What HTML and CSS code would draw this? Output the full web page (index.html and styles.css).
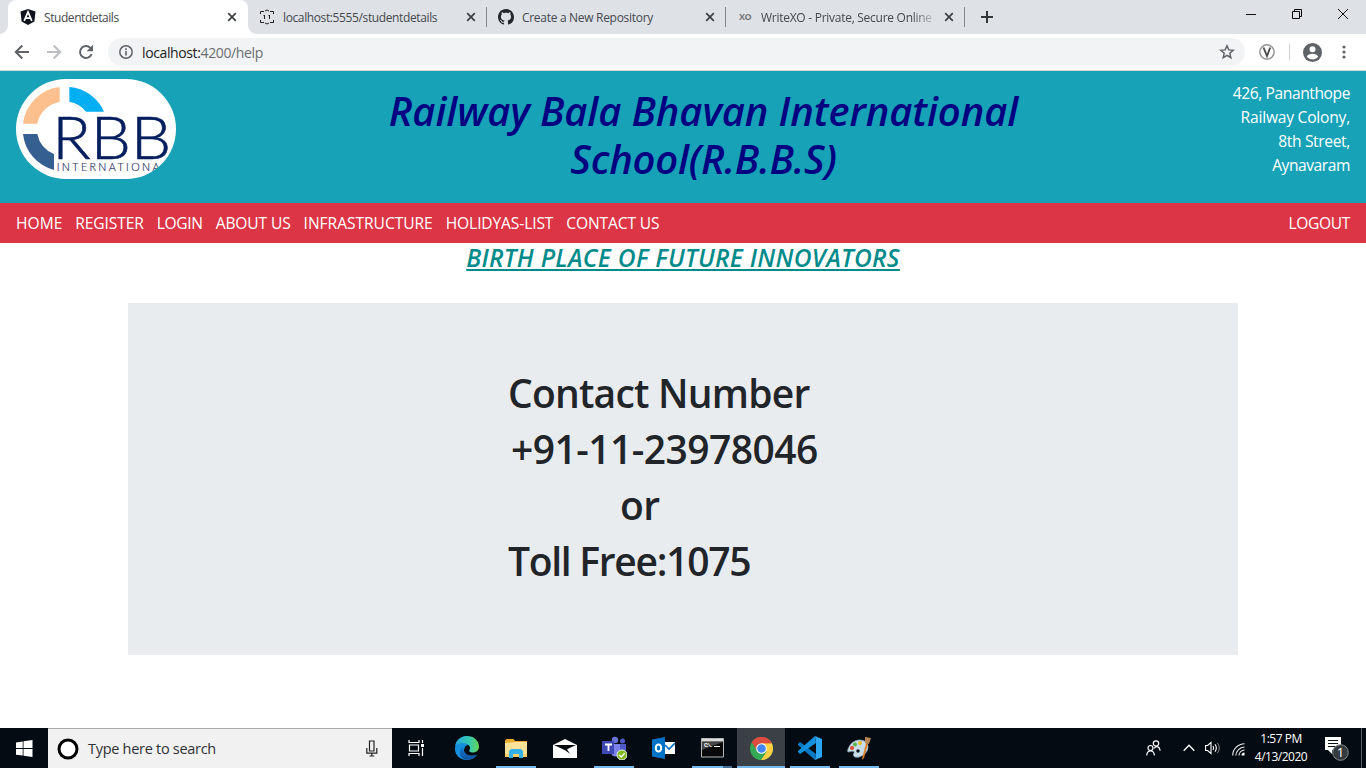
FILE: index.html
```html
<!DOCTYPE html>
<html lang="en">
<head>
<meta charset="utf-8">
<title>Studentdetails</title>
<link rel="stylesheet" href="styles.css">
</head>
<body>
<div class="screen">
  <div class="tabstrip">
    <div class="tab tab-active">
      <svg class="fav" viewBox="0 0 16 16"><path fill="#10131c" d="M8 0l7.500 2.600-1.100 10L8 16l-6.400-3.400L.5 2.600z"/><path fill="none" stroke="#fff" stroke-width="1.700" d="M4.200 11.800L8 2.900l3.800 8.900M5.700 9.200h4.600"/></svg>
      <span class="tab-title t1">Studentdetails</span>
      <svg class="close" viewBox="0 0 10 10"><path d="M1.200 1.200l7.600 7.600M8.800 1.200L1.200 8.800"/></svg>
    </div>
    <div class="tab">
      <svg class="fav" viewBox="0 0 16 16"><path fill="none" stroke="#222" d="M1.500 5V2.500H5M6 2l2-1 2 1M11 2.500h3.500V5M1.500 11v2.500H5M6 14l2 1 2-1M11 13.500h3.500V11M5.500 6v4M4.500 6.500h1M10.500 6v4M9.500 6.500h1"/></svg>
      <span class="tab-title t2">localhost:5555/studentdetails</span>
      <svg class="close" viewBox="0 0 10 10"><path d="M1.200 1.200l7.600 7.600M8.800 1.200L1.200 8.800"/></svg>
    </div>
    <div class="tab tab-line">
      <svg class="fav" viewBox="0 0 16 16"><path fill="#24292e" d="M8 0C3.580 0 0 3.580 0 8c0 3.540 2.290 6.530 5.470 7.590.4.070.55-.17.55-.38 0-.19-.01-.82-.01-1.490-2.010.37-2.530-.49-2.690-.94-.09-.23-.48-.94-.82-1.130-.28-.15-.68-.52-.01-.53.63-.01 1.080.58 1.230.82.72 1.210 1.870.87 2.330.66.07-.52.28-.87.51-1.070-1.780-.2-3.640-.89-3.640-3.950 0-.87.31-1.590.82-2.150-.08-.2-.36-1.020.08-2.120 0 0 .67-.21 2.200.82.640-.18 1.320-.27 2-.27s1.360.09 2 .27c1.530-1.040 2.200-.82 2.200-.82.44 1.100.16 1.920.08 2.120.51.56.82 1.270.82 2.150 0 3.070-1.870 3.750-3.650 3.950.29.25.54.73.54 1.480 0 1.070-.01 1.930-.01 2.200 0 .21.15.46.55.38A8.010 8.010 0 0 0 16 8c0-4.420-3.580-8-8-8z"/></svg>
      <span class="tab-title t3">Create a New Repository</span>
      <svg class="close" viewBox="0 0 10 10"><path d="M1.200 1.200l7.600 7.600M8.800 1.200L1.200 8.800"/></svg>
    </div>
    <div class="tab tab-line">
      <span class="fav xo">XO</span>
      <span class="tab-title t4">WriteXO - Private, Secure Online</span>
      <svg class="close" viewBox="0 0 10 10"><path d="M1.200 1.200l7.600 7.600M8.800 1.200L1.200 8.800"/></svg>
    </div>
    <div class="newtab tab-line"><svg width="12" height="12" viewBox="0 0 12 12"><path stroke="#333639" stroke-width="2" d="M6 0v12M0 6h12"/></svg></div>
    <div class="wincontrols">
      <svg width="10" height="10" viewBox="0 0 10 10"><path stroke="#111" d="M0 5.500h10"/></svg>
      <svg width="10" height="10" viewBox="0 0 10 10"><path fill="none" stroke="#000" d="M.5 2.500h7v7h-7zM2.500 2.500v-2h7v7h-2"/></svg>
      <svg width="10" height="10" viewBox="0 0 10 10"><path stroke="#111" d="M0 0l10 10M10 0L0 10"/></svg>
    </div>
  </div>

  <div class="toolbar">
    <svg class="navicon" viewBox="0 0 16 16"><path stroke="#5f6368" d="M15 8H2M8.300 1.500L1.800 8l6.500 6.500"/></svg>
    <svg class="navicon" viewBox="0 0 16 16"><path stroke="#bcbec1" d="M1 8h13M7.700 1.500L14.200 8l-6.500 6.500"/></svg>
    <svg class="navicon" viewBox="0 0 16 16"><path stroke="#5f6368" d="M13.600 10.200A6 6 0 1 1 12.400 3.900L14 5.500"/><path fill="#5f6368" d="M15 .8v6.400H8.600z"/></svg>
    <div class="omnibox">
      <svg width="14" height="14" viewBox="0 0 14 14"><circle cx="7" cy="7" r="6.200" fill="none" stroke="#5f6368" stroke-width="1.500"/><path stroke="#5f6368" stroke-width="1.600" d="M7 6v4.500M7 3.300v1.600"/></svg>
      <span class="url">localhost:<i>4200/help</i></span>
      <svg class="star" width="16" height="16" viewBox="0 0 16 16"><path fill="none" stroke="#5f6368" stroke-width="1.500" d="M8 1.800l1.800 4.100 4.400.4-3.400 2.900 1 4.400L8 11.300l-3.800 2.300 1-4.400-3.400-2.900 4.400-.4z"/></svg>
    </div>
    <svg class="ext" width="16" height="16" viewBox="0 0 16 16"><circle cx="8" cy="8" r="7.200" fill="#fafafa" stroke="#929292" stroke-width="1.400"/><path fill="none" stroke="#494949" stroke-width="1.800" d="M4.500 3.500L8 12l3.200-8.500"/></svg>
    <span class="bar"></span>
    <svg class="profile" width="19" height="19" viewBox="0 0 19 19"><circle cx="9.500" cy="9.500" r="9.500" fill="#5f6368"/><circle cx="9.500" cy="6.300" r="3" fill="#fff"/><path fill="#fff" d="M3.800 13.400c1.500-3.400 9.900-3.400 11.400 0-2.700 4-8.700 4-11.400 0z"/></svg>
    <svg class="dots" width="4" height="14" viewBox="0 0 4 14"><g fill="#5f6368"><circle cx="2" cy="2" r="1.600"/><circle cx="2" cy="7" r="1.600"/><circle cx="2" cy="12" r="1.600"/></g></svg>
  </div>

  <main class="page">
    <header class="banner">
      <svg class="logo" viewBox="48 27 480 300">
        <path fill="#fcc08f" d="M179 51A125 125 0 0 0 69 161H112A82 82 0 0 1 179 96Z"/>
        <path fill="#03aef3" d="M208 51A125 125 0 0 1 312 125H258A80 80 0 0 0 208 95Z"/>
        <path fill="#365f91" d="M69 192H112A82 82 0 0 0 162 252V300A125 125 0 0 1 69 192Z"/>
        <text class="logo-rbb" x="157" y="268" textLength="356" lengthAdjust="spacingAndGlyphs">RBB</text>
        <text class="logo-int" x="170" y="302" textLength="332">INTERNATIONAL</text>
      </svg>
      <h1 class="school"><span class="s1">Railway Bala Bhavan International</span><br><span class="s2">School(R.B.B.S)</span></h1>
      <address class="address"><span class="a1">426, Pananthope</span><br><span class="a2">Railway Colony,</span><br><span class="a3">8th Street,</span><br><span class="a4">Aynavaram</span></address>
    </header>
    <nav class="menu">
      <a class="m1">HOME</a><a class="m2">REGISTER</a><a class="m3">LOGIN</a><a class="m4">ABOUT US</a><a class="m5">INFRASTRUCTURE</a><a class="m6">HOLIDYAS-LIST</a><a class="m7">CONTACT US</a><a class="m8">LOGOUT</a>
    </nav>
    <h2 class="motto">BIRTH PLACE OF FUTURE INNOVATORS</h2>
    <section class="jumbo">
      <h1 class="c1">Contact Number</h1>
      <h1 class="c2">+91-11-23978046</h1>
      <h1 class="c3">or</h1>
      <h1 class="c4">Toll Free:1075</h1>
    </section>
  </main>

  <footer class="taskbar">
    <div class="start"><svg width="17" height="17" viewBox="0 0 17 17"><path fill="#fff" d="M0 2.400l6.700-1v6.700H0zM7.500 1.200L16.500 0v8.100h-9zM0 8.900h6.700v6.700L0 14.700zM7.500 8.900h9V17l-9-1.200z"/></svg></div>
    <div class="search">
      <svg width="22" height="22" viewBox="0 0 22 22"><circle cx="11" cy="11" r="9" fill="#fff" stroke="#000" stroke-width="3"/></svg>
      <span class="hint">Type here to search</span>
      <svg class="mic" width="12" height="17" viewBox="0 0 12 17"><path fill="none" stroke="#222" stroke-width="1.200" d="M3.500 1h4.500v10H3.500zM.8 8v5.200h10V8M5.800 13v3M3.500 16h4.800"/></svg>
    </div>
    <div class="task view"><svg width="18" height="16" viewBox="0 0 18 16"><path fill="none" stroke="#fff" stroke-width="1.200" d="M1 0v2.500h10V0M1.500 5h9v6h-9zM1 16v-2.500h10V16M14.500 0v3M14.500 8v8"/><path fill="#fff" d="M13 4h3v3h-3z"/></svg></div>
    <div class="apps">
      <div class="task"><svg width="24" height="24" viewBox="0 0 24 24"><defs><linearGradient id="eg"><stop stop-color="#25a8df"/><stop offset=".6" stop-color="#35c9b0"/><stop offset="1" stop-color="#67d553"/></linearGradient><linearGradient id="eb" x2="0" y2="1"><stop stop-color="#1780d5"/><stop offset="1" stop-color="#0d4f9f"/></linearGradient></defs><path fill="#1690dd" d="M0 13C0 5 5 0 12 0l5 10c-4-3-8 0-8 5 0 6 8 8 13 4-7 9-22 5-22-6z"/><path fill="url(#eg)" d="M.3 9C2 3.500 6.500 0 12 0c7 0 12 5 12 10.500 0 4-3 6-6.500 6-2.500 0-4-1-3-2.500 3-5-6-10-13.700-5z"/><path fill="url(#eb)" d="M8.500 10.500C7.500 16 12 21.500 22 18.800 19 23.500 13.500 24.500 10 23.500 3 21 3.500 13 8.500 10.500z"/></svg></div>
      <div class="task run"><svg width="22" height="19" viewBox="0 0 22 19"><path fill="#e9ac2c" d="M0 1.500L1.500 0h7L10 2h12v4H0z"/><path fill="#ffe29a" d="M0 4l10-1h12v15H0z"/><path fill="#f8cf66" d="M0 15h22v3H0z"/><path fill="#35b1e9" d="M4 19v-7l2-2h10l2 2v7h-4v-4H8v4z"/></svg></div>
      <div class="task"><svg width="24" height="19" viewBox="0 0 24 19"><path fill="#fff" d="M0 6L12 0l12 6v13H0z"/><path fill="#070b10" d="M1 6h22l-9 4.300 3 4.500-5-3.500z"/></svg></div>
      <div class="task run"><svg width="25" height="24" viewBox="0 0 25 24"><circle cx="13" cy="4" r="3.200" fill="#6972d5"/><circle cx="20.500" cy="5" r="2.500" fill="#5059c9"/><path fill="#7b83eb" d="M9 8h9v8c0 6-9 6-9 0z"/><path fill="#5059c9" d="M18 8h6v6c0 4-6 5-6 0z"/><path fill="#3f49b5" d="M0 5h12v13H0z"/><path stroke="#fff" stroke-width="1.800" d="M3 8.500h7M6.500 8v7"/><circle cx="20" cy="19" r="5" fill="#7fba1c" stroke="#e9f4dd"/><path fill="none" stroke="#fff" stroke-width="1.400" d="M17.300 19l2 2 3.400-3.700"/></svg></div>
      <div class="task"><svg width="23" height="22" viewBox="0 0 23 22"><path fill="#fff" d="M12 5h11v12H12z"/><path fill="none" stroke="#0072c6" stroke-width="1.600" d="M13 8l4 4 6-6"/><path fill="#0072c6" d="M0 2.500L13 0v22L0 19.500z"/><ellipse cx="6.500" cy="11" rx="2.700" ry="3.600" fill="none" stroke="#fff" stroke-width="2"/></svg></div>
      <div class="task run two"><svg width="23" height="20" viewBox="0 0 23 20"><path fill="#090909" stroke="#b6b8b9" d="M.5.500h22v18.500H.5z"/><path fill="#ddd" d="M1 1h21v2.500H1z"/><path fill="#454545" d="M1 4h21L1 12z"/><text class="cmd" x="3" y="9" textLength="9">C:\.</text><path stroke="#fff" d="M13 8.500h6"/></svg></div>
      <div class="task run active"><svg width="23" height="23" viewBox="0 0 24 24"><circle cx="12" cy="12" r="12" fill="#34a853"/><path fill="#de4b3f" d="M12 12L1.600 6a12 12 0 0 1 20.800 0z"/><path fill="#ffd044" d="M12 6.500h10.700A12 12 0 0 1 11.500 24l6-9z"/><path fill="#de4b3f" d="M2 5.400L7 14l5-7.500h10.700A12 12 0 0 0 2 5.400z"/><circle cx="12" cy="12" r="5.600" fill="#fff"/><circle cx="12" cy="12" r="4.500" fill="#4285f4"/></svg></div>
      <div class="task run"><svg width="24" height="24" viewBox="0 0 24 24"><path fill="#0879c2" d="M0 8l2-2 16 12-1 6L0 9z"/><path fill="#1590dc" d="M0 16l2 2L18 7l-1-7L0 15z"/><path fill="#2aa7ef" d="M17 0l7 3v18l-7 3 1-5V6z"/></svg></div>
      <div class="task run"><svg width="24" height="24" viewBox="0 0 24 24"><path fill="#c9dce9" stroke="#8ba9bd" stroke-width=".7" d="M2 11C5 4 14 2 19 6c5 6 0 13-7 15-4 1-7-1-5-4 1-3-4-1-6-1-1-1 0-3 1-5z"/><circle cx="5" cy="12" r="2" fill="#e34729"/><circle cx="8" cy="8.500" r="2" fill="#55b44a"/><circle cx="13" cy="7" r="2" fill="#e9bb28"/><circle cx="11" cy="15" r="1.700" fill="#0a1118"/><path fill="#d9822b" d="M19 7l2 1-4 14-2 2 1-5z"/><path fill="#b98552" d="M18 1l6 1-2 6-4-1z"/></svg></div>
    </div>
    <div class="tray">
      <svg class="people" width="15" height="16" viewBox="0 0 15 16"><g fill="none" stroke="#fff" stroke-width="1.200"><circle cx="10" cy="3.500" r="2.700"/><circle cx="4.500" cy="8" r="2.500"/><path d="M.8 15.500c0-6 7.500-6 7.500 0M8.300 8.300c2-3 5.600-1.500 5.800 2.500"/></g></svg>
      <svg class="chev" width="12" height="8" viewBox="0 0 12 8"><path fill="none" stroke="#fff" stroke-width="1.300" d="M.7 6.800L6 1.300l5.300 5.500"/></svg>
      <svg class="vol" width="16" height="14" viewBox="0 0 16 14"><path fill="none" stroke="#fff" stroke-width="1.100" d="M.6 4.500h2L6 1.500v11l-3.400-3H.6zM8 5q1.300 2 0 4M10 3.300q2.700 3.700 0 7.400"/><path fill="none" stroke="#888" d="M12.300 1.800q4 5.200 0 10.400"/></svg>
      <svg class="wifi" width="13" height="13" viewBox="0 0 13 13"><g fill="none" stroke="#eee" stroke-width="1.100"><path d="M.7 12.500A12 12 0 0 1 12.500.7M3.800 12.500A9 9 0 0 1 12.500 4M6.900 12.500A6 6 0 0 1 12.500 7"/></g><path fill="#fff" d="M9.500 12.500a3 3 0 0 1 3-3v3z"/></svg>
      <div class="clock"><span class="time">1:57 PM</span><span class="date">4/13/2020</span></div>
      <svg class="notice" width="26" height="26" viewBox="0 0 26 26"><path fill="#fff" d="M1 1h16v13H8v4l-4-4H1z"/><path stroke="#0b1016" stroke-width="1.200" d="M4 4.500h10M4 7.500h10M4 10.500h7"/><circle cx="16.500" cy="16.500" r="7.800" fill="#343a3e" stroke="#858b8e"/><text class="badge" x="16.500" y="21">1</text></svg>
      <span class="peek"></span>
    </div>
  </footer>
</div>
</body>
</html>
```
FILE: styles.css
```css
* { box-sizing: border-box; }
body { margin: 0; font-family: "Open Sans", "Noto Sans", sans-serif; }
svg { display: block; flex: none; }
h1, h2 { margin: 0; }
.screen { width: 1366px; height: 768px; display: flex; flex-direction: column; overflow: hidden; background: #fff; }

/* browser tabs */
.tabstrip { height: 34px; background: #dee1e6; display: flex; padding-left: 8px; flex: none; }
.tab { width: 239px; height: 34px; display: flex; align-items: center; padding: 0 11px; position: relative; white-space: nowrap; }
.tab-active { width: 240px; padding-left: 12px; background: #fff; border-radius: 8px 8px 0 0; }
.tab-active::before, .tab-active::after { content: ""; position: absolute; bottom: 0; width: 8px; height: 8px; }
.tab-active::before { left: -8px; background: radial-gradient(circle at 0 0, transparent 7.500px, #fff 8px); }
.tab-active::after { right: -8px; background: radial-gradient(circle at 100% 0, transparent 7.500px, #fff 8px); }
.tab-line::before { content: ""; position: absolute; left: -1px; top: 7px; width: 1px; height: 20px; background: #85888c; }
.fav { width: 16px; height: 16px; margin-right: 8px; flex: none; }
.xo { font: bold 9px/16px "Open Sans", sans-serif; color: #777; text-align: center; letter-spacing: -.5px; }
.tab-title { font-size: 12px; color: #45494d; flex: 1; overflow: hidden; }
.t1 { letter-spacing: -.43px; }
.t2 { letter-spacing: -.38px; }
.t3 { letter-spacing: -.3px; }
.t4 { letter-spacing: -.27px; margin-right: 8px; -webkit-mask-image: linear-gradient(90deg, #000 86%, transparent 102%); mask-image: linear-gradient(90deg, #000 86%, transparent 102%); }
.close { width: 10px; height: 10px; fill: none; stroke: #3c4043; stroke-width: 1.700; }
.newtab { width: 44px; display: flex; align-items: center; justify-content: center; position: relative; }
.wincontrols { margin-left: auto; display: flex; gap: 36px; padding: 9px 18px 0 0; }

/* address bar */
.toolbar { height: 37px; flex: none; display: flex; align-items: center; padding-left: 14px; border-bottom: 1px solid #d5d7da; }
.navicon { width: 16px; height: 16px; fill: none; stroke-width: 2; margin-right: 16px; }
.omnibox { width: 1137px; height: 28px; margin-left: -2px; background: #f1f3f4; border-radius: 14px; display: flex; align-items: center; padding: 0 10px 0 11px; }
.url { font-size: 14px; color: #202124; margin-left: 9px; letter-spacing: -.38px; }
.url i { font-style: normal; color: #6a6e73; }
.star { margin-left: auto; }
.ext { margin-left: 14px; }
.bar { width: 1px; height: 16px; background: #cfd1d4; margin-left: 14px; }
.profile { margin-left: 13px; }
.dots { margin-left: 20px; }

/* school site */
.page { flex: 1; display: flex; flex-direction: column; align-items: stretch; }
.banner { height: 132px; background: #17a2b8; display: flex; justify-content: space-between; padding: 8px 16px 0; }
.logo { width: 160px; height: 100px; border-radius: 50px; background: #fff; overflow: hidden; }
.logo-rbb { font: 300 178px Lato, sans-serif; fill: #041e5e; stroke: #041e5e; stroke-width: 2; }
.logo-int { font: 300 32px Lato, sans-serif; fill: #30386d; stroke: #30386d; stroke-width: .6; }
.school { font-size: 40px; line-height: 48px; font-weight: 600; font-style: italic; color: navy; text-align: center; padding-top: 8px; flex: 1; white-space: nowrap; }
.s1 { letter-spacing: -.12px; }
.s2 { letter-spacing: -.26px; }
.address { font-size: 15.600px; line-height: 24px; font-style: normal; color: #fff; text-align: right; padding-top: 2px; width: 119px; white-space: nowrap; }
.a1 { letter-spacing: -.42px; }
.a2 { letter-spacing: -.22px; }
.a3 { letter-spacing: -.36px; }
.a4 { letter-spacing: -.44px; }
.menu { height: 40px; background: #dc3545; color: #fff; display: flex; align-items: center; gap: 13px; padding: 0 16px; font-size: 15.600px; white-space: nowrap; }
.m2, .m4, .m6, .m7 { letter-spacing: -.13px; }
.m3, .m8 { letter-spacing: -.35px; }
.m5 { letter-spacing: -.05px; }
.m8 { margin-left: auto; }
.motto { font-size: 24.500px; line-height: 29px; font-weight: 600; font-style: italic; color: #008b8b; text-align: center; text-decoration: underline; letter-spacing: .32px; }
.jumbo { width: 1110px; height: 352px; margin: 31px 0 0 128px; background: #e9ecef; padding: 66px 0 0 380px; color: #212529; }
.jumbo h1 { font-size: 39px; line-height: 48px; height: 56px; font-weight: 600; white-space: nowrap; }
.c1 { letter-spacing: -.78px; }
.c2 { letter-spacing: -.55px; padding-left: 3px; }
.c3 { letter-spacing: -.5px; padding-left: 112px; }
.c4 { letter-spacing: -1.280px; }

/* desktop taskbar */
.taskbar { height: 40px; flex: none; display: flex; background: #050b12; }
.start { width: 48px; display: flex; align-items: center; justify-content: center; }
.search { width: 344px; background: #f1f1f1; border-top: 1px solid #aaa; display: flex; align-items: center; padding: 0 14px 0 9px; }
.hint { font-size: 14.500px; color: #2e3236; margin-left: 9px; letter-spacing: -.29px; }
.mic { margin-left: auto; }
.task { width: 48px; height: 40px; display: flex; align-items: center; justify-content: center; position: relative; }
.view { padding-left: 2px; margin-right: 3px; }
.apps { display: flex; gap: 1px; }
.run::after { content: ""; position: absolute; left: 4px; right: 4px; bottom: 0; height: 2px; background: #76b9ed; }
.two::after { background: linear-gradient(90deg, #76b9ed 31px, #42709a 31px); }
.active { background: #3b4047; }
.active::after { left: 0; right: 0; }
.cmd { font: bold 6px "Liberation Mono", monospace; fill: #fff; }
.tray { margin-left: auto; display: flex; align-items: center; color: #fff; }
.chev { margin-left: 22px; }
.vol { margin-left: 10px; }
.wifi { margin: 2px 0 0 11px; }
.clock { width: 60px; margin-left: 6px; font-size: 12px; line-height: 18px; display: flex; flex-direction: column; align-items: center; white-space: nowrap; letter-spacing: -.5px; }
.notice { margin: 2px 0 0 13px; }
.badge { font: 13px "Open Sans", sans-serif; fill: #fff; text-anchor: middle; }
.peek { width: 1px; height: 40px; background: #555b61; margin: 0 4px 0 11px; }
```
